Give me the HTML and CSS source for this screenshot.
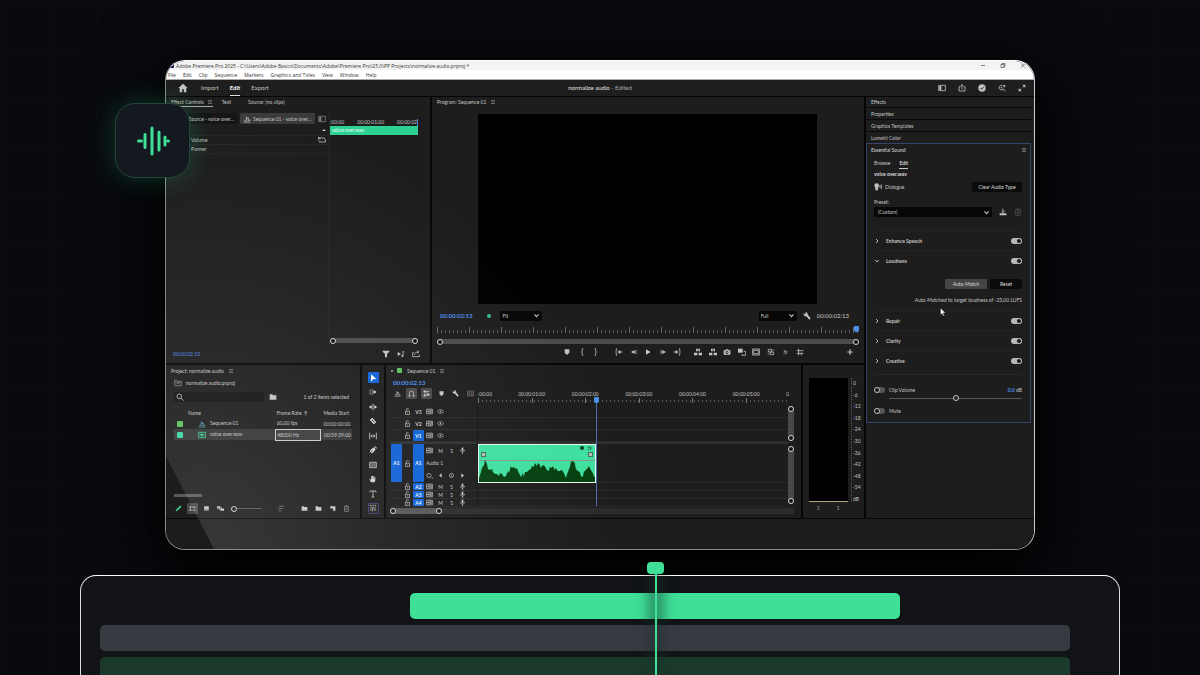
FILE: index.html
```html
<!DOCTYPE html>
<html lang="en">
<head>
<meta charset="utf-8">
<title>normalize audio</title>
<link rel="stylesheet" href="styles.css">
</head>
<body>
<svg class="defs" aria-hidden="true">
  <symbol id="menu" viewBox="0 0 12 12"><path d="M2 3h8M2 6h8M2 9h8" class="ln"/></symbol>
  <symbol id="home" viewBox="0 0 12 12"><path d="M6 1 0.5 6H2v5h3V7.500h2V11h3V6h1.500z" class="fl"/></symbol>
  <symbol id="layout" viewBox="0 0 12 12"><path d="M1 2h10v8H1z" class="ln"/><path d="M2 3h3v6H2z" class="fl"/></symbol>
  <symbol id="share" viewBox="0 0 12 12"><path d="M3.500 4H1.500v6.500h9V4h-2M6 8V1M3.800 3 6 1l2.200 2" class="ln"/></symbol>
  <symbol id="exportf" viewBox="0 0 12 12"><path d="M3 4H1v6h10V7M4 7c0-3 2-4 6-4M8 1l2.500 2L8 5" class="ln"/></symbol>
  <symbol id="check" viewBox="0 0 12 12"><circle cx="6" cy="6" r="5.500" class="fl"/><path d="m3.500 6 2 2 3.500-4" class="dk"/></symbol>
  <symbol id="find" viewBox="0 0 12 12"><path d="M7 2.500A3.500 3.500 0 1 0 8 7.500l3 3.500M9.500 1v4M7.500 3h4M4 5h2v2" class="ln"/></symbol>
  <symbol id="expand" viewBox="0 0 12 12"><path d="m1.500 10.500 3.500-3.500M7 5l3.500-3.500" class="ln"/><path d="M6.500 1H11v4.500zM1 6.500 5.500 11H1z" class="fl"/></symbol>
  <symbol id="seq" viewBox="0 0 12 12"><path d="M1 10.500h10M2 8h2M5 2v7M5 5h3M8 4v5M9 8h2" class="ln"/></symbol>
  <symbol id="loop" viewBox="0 0 12 12"><path d="M3 3h6l2 2v4H2M1 1.500 3.500 3 1 5.500zM1 9l2-2" class="ln"/></symbol>
  <symbol id="filter" viewBox="0 0 12 12"><path d="M1 1h10v1.500L7.500 6v5h-3V6L1 2.500z" class="fl"/></symbol>
  <symbol id="playsnd" viewBox="0 0 12 12"><path d="M1 3v6l5-3z" class="fl"/><path d="M9 9V2l2 1" class="ln"/><circle cx="8" cy="9" r="1.500" class="fl"/></symbol>
  <symbol id="folder" viewBox="0 0 12 12"><path d="M1 2h4l1 1.500h5V10H1z" class="fl"/></symbol>
  <symbol id="bin" viewBox="0 0 12 12"><path d="M1 2h4l1 1.500h5V10H1zM1 5h10M4 7h4" class="ln"/></symbol>
  <symbol id="search" viewBox="0 0 12 12"><circle cx="5" cy="5" r="3.500" class="ln"/><path d="m7.500 7.500 4 4" class="ln"/></symbol>
  <symbol id="wavefile" viewBox="0 0 12 12"><path d="M.5 2h11v8H.5zM2 6h1l1-2 1 4 1-4 1 4 1-3 1 1h1" class="ln"/></symbol>
  <symbol id="pencil" viewBox="0 0 12 12"><path d="m1 11 1-3 7-7 2 2-7 7z" class="fl"/></symbol>
  <symbol id="list" viewBox="0 0 12 12"><path d="M1 2h3v3H1zM1 7h3v3H1zM6 3h5v1.500H6zM6 8h5v1.500H6z" class="fl"/></symbol>
  <symbol id="square" viewBox="0 0 12 12"><path d="M2 2h8v6H2zM2 9h8v1H2z" class="fl"/></symbol>
  <symbol id="stack" viewBox="0 0 12 12"><path d="M0 2h6v4H0zM3 7h4V4h1v4H3zM6 6h6v4H6z" class="fl"/></symbol>
  <symbol id="sort" viewBox="0 0 12 12"><path d="M1 2h10M1 6h7M1 10h5" class="ln"/></symbol>
  <symbol id="page" viewBox="0 0 12 12"><path d="M2 2h9v8H7V6H2z" class="fl"/></symbol>
  <symbol id="trash" viewBox="0 0 12 12"><path d="M1.500 3h9M4.500 3V1h3v2M2.500 3v8h7V3M5 5v4M7 5v4" class="ln"/></symbol>
  <symbol id="arrow" viewBox="0 0 12 12"><path d="M3 .5v11l3-3.500 5-.5z" class="fl"/></symbol>
  <symbol id="trackfwd" viewBox="0 0 12 12"><path d="M1 3h2M4 3h2M1 9h2M4 9h2M1 5v2M4 6h4" class="ln"/><path d="M7 3v6l4.500-3z" class="fl"/></symbol>
  <symbol id="ripple" viewBox="0 0 12 12"><path d="M6 1v10M1 6h3M8 6h3" class="ln"/><path d="M0 6l4-3v6zM12 6 8 3v6z" class="fl"/></symbol>
  <symbol id="razor" viewBox="0 0 12 12"><path d="m1 4 4-3 6 7-4 3z" class="fl"/><path d="m4 4 4 4" class="dk"/></symbol>
  <symbol id="slip" viewBox="0 0 12 12"><path d="M1 1v10M11 1v10M3 6h6M5 4 3 6l2 2M7 4l2 2-2 2" class="ln"/></symbol>
  <symbol id="pen" viewBox="0 0 12 12"><path d="M1 11 2 6l5-4 3 3-4 5zM8 1l1-1 3 3-1 1z" class="fl"/><path d="m1 11 4-4" class="dk"/></symbol>
  <symbol id="rect" viewBox="0 0 12 12"><path d="M1 2h10v8H1z" class="ln"/><path d="M2 3h8v6H2z" class="fl dim"/></symbol>
  <symbol id="hand" viewBox="0 0 12 12"><path d="M3 11 .5 6.500l1-.5L3 7.500V2h1.300v3.500h.4V1H6v4.500h.4V1.500h1.300V6h.5V3h1.300v5L8.500 11z" class="fl"/></symbol>
  <symbol id="type" viewBox="0 0 12 12"><path d="M1.500 3.500v-2h9v2M6 1.500v9M4 10.500h4" class="ln"/></symbol>
  <symbol id="remix" viewBox="0 0 12 12"><path d="M1 2h3M6 1v3M8 2h3M3 4v3M9 4v3M1 9h2M5 6v5M7 9h4M5 6h3" class="ln"/></symbol>
  <symbol id="magnet" viewBox="0 0 12 12"><path d="M2.500 11V5.500a3.500 3.500 0 0 1 7 0V11" class="ln"/><path d="M1 9h3v2H1zM8 9h3v2H8z" class="fl"/></symbol>
  <symbol id="link" viewBox="0 0 12 12"><path d="M1 1h4v3H1zM1 8h4v3H1zM6 6h5v4H6z" class="fl"/><path d="M5 2.500h6M3 4v5M6 5l3-3" class="ln"/></symbol>
  <symbol id="marker" viewBox="0 0 12 12"><path d="M2.500 2h7v5L6 10.500 2.500 7z" class="fl"/></symbol>
  <symbol id="wrench" viewBox="0 0 12 12"><path d="M1 1.500 3 3.500l1.500-1.500L3 .5c3-.8 4.500 1.500 4 3.500l4.500 5.500-2 2L5 6.500C2.500 7 .3 4.500 1 1.500z" class="fl"/></symbol>
  <symbol id="cc" viewBox="0 0 12 12"><path d="M.5 2h11v8H.5zM5 4.500H3v3h2M9.500 4.500h-2v3h2" class="ln"/></symbol>
  <symbol id="lock" viewBox="0 0 12 12"><path d="M2.500 5.500h7V11h-7zM4 5.500V3a2 2 0 0 1 4-.5M6 7.500V9" class="ln"/></symbol>
  <symbol id="sync" viewBox="0 0 12 12"><path d="M1 2h10v8H1zM5 2v8M1 6h4M7 4h2v4H7z" class="ln"/></symbol>
  <symbol id="eye" viewBox="0 0 12 12"><path d="M.5 6C3 2 9 2 11.500 6 9 10 3 10 .5 6z" class="ln"/><circle cx="6" cy="6" r="1.300" class="fl"/></symbol>
  <symbol id="mic" viewBox="0 0 12 12"><path d="M4.500 1h3v6h-3z" class="fl"/><path d="M2.500 5c0 5 7 5 7 0M6 9v3" class="ln"/></symbol>
  <symbol id="keys" viewBox="0 0 12 12"><circle cx="5" cy="6" r="3.500" class="ln"/><path d="M9.500 9.500h2v1.500h-2z" class="fl"/></symbol>
  <symbol id="key" viewBox="0 0 12 12"><circle cx="6" cy="6" r="3.500" class="ln"/><path d="M6 4.500v3" class="ln"/></symbol>
  <symbol id="prev" viewBox="0 0 12 12"><path d="M8 2v8L3.500 6z" class="fl"/></symbol>
  <symbol id="next" viewBox="0 0 12 12"><path d="M4 2v8l4.500-4z" class="fl"/></symbol>
  <symbol id="brl" viewBox="0 0 12 12"><path d="M8 1H6.500v4L5 6l1.500 1v4H8" class="ln"/></symbol>
  <symbol id="brr" viewBox="0 0 12 12"><path d="M4 1h1.500v4L7 6 5.500 7v4H4" class="ln"/></symbol>
  <symbol id="goin" viewBox="0 0 12 12"><path d="M3 1H2v4L.8 6 2 7v4h1M5 6h6.500" class="ln"/><path d="M4 6l4-3v6z" class="fl"/></symbol>
  <symbol id="goout" viewBox="0 0 12 12"><path d="M9 1h1v4l1.200 1L10 7v4H9M.5 6H7" class="ln"/><path d="M8 6 4 3v6z" class="fl"/></symbol>
  <symbol id="stepb" viewBox="0 0 12 12"><path d="M7 3v6L1.500 6z" class="fl"/><path d="M9 3v6" class="ln"/></symbol>
  <symbol id="stepf" viewBox="0 0 12 12"><path d="M5 3v6l5.500-3z" class="fl"/><path d="M3 3v6" class="ln"/></symbol>
  <symbol id="play" viewBox="0 0 12 12"><path d="M3 2v8l7-4z" class="fl"/></symbol>
  <symbol id="lift" viewBox="0 0 12 12"><path d="M0 7h5v4H0zM7 7h5v4H7zM3 1h6v4H3z" class="fl"/><path d="M6 2v3" class="dk"/></symbol>
  <symbol id="camera" viewBox="0 0 12 12"><path d="M1 3.500h2.500l1-1.500h3l1 1.500H11V10H1z" class="fl"/><circle cx="6" cy="6.500" r="1.800" class="dk"/></symbol>
  <symbol id="compare" viewBox="0 0 12 12"><path d="M0 1h7v6H0z" class="fl"/><path d="M8.500 5h3v6H6V9" class="ln"/></symbol>
  <symbol id="safe" viewBox="0 0 12 12"><path d="M.5 1.500h11v9H.5zM2.500 3.500h7v5h-7z" class="ln"/></symbol>
  <symbol id="proxy" viewBox="0 0 12 12"><path d="M2 2h5v4H2zM5 6h5v4H5zM9 2l2 2M1 8l2 2" class="ln"/></symbol>
  <symbol id="guides" viewBox="0 0 12 12"><path d="M1 4h10M1 8h10M4 1v10M8 7v4" class="ln"/></symbol>
  <symbol id="plus" viewBox="0 0 12 12"><path d="M6 2v8M2 6h8" class="ln thick"/></symbol>
  <symbol id="down" viewBox="0 0 12 12"><path d="m2.500 4 3.500 4 3.500-4" class="ln thick"/></symbol>
  <symbol id="right" viewBox="0 0 12 12"><path d="m4 2 4 4-4 4" class="ln thick"/></symbol>
  <symbol id="voice" viewBox="0 0 12 12"><circle cx="4" cy="4" r="3.500" class="fl"/><path d="M2 7h4v4H2z" class="fl"/><path d="M9 3v5M11 2v7" class="ln"/></symbol>
  <symbol id="save" viewBox="0 0 12 12"><path d="M1 8h10v3H1z" class="fl"/><path d="M6 1v6M3.500 4.500 6 7l2.500-2.500" class="ln"/></symbol>
  <symbol id="min" viewBox="0 0 12 12"><path d="M2 6h8" class="ln"/></symbol>
  <symbol id="restore" viewBox="0 0 12 12"><path d="M2 4h6v6H2zM4 4V2h6v6H8" class="ln"/></symbol>
  <symbol id="close" viewBox="0 0 12 12"><path d="m2 2 8 8M10 2l-8 8" class="ln"/></symbol>
</svg>

<main class="stage">
  <section class="window">
    <header class="titlebar">
      <i class="app-mark"></i>
      <span>Adobe Premiere Pro 2025 - C:\Users\Adobe Basics\Documents\Adobe\Premiere Pro\25.0\PP Projects\normalize audio.prproj *</span>
      <div class="win-buttons">
        <button aria-label="Minimize"><svg><use href="#min"/></svg></button>
        <button aria-label="Restore"><svg><use href="#restore"/></svg></button>
        <button aria-label="Close"><svg><use href="#close"/></svg></button>
      </div>
    </header>
    <nav class="menubar">
      <button>File</button><button>Edit</button><button>Clip</button><button>Sequence</button><button>Markers</button><button>Graphics and Titles</button><button>View</button><button>Window</button><button>Help</button>
    </nav>
    <div class="workbar">
      <nav class="modes">
        <button aria-label="Home"><svg class="i9"><use href="#home"/></svg></button>
        <button>Import</button><button class="on">Edit</button><button>Export</button>
      </nav>
      <h1>normalize audio <span>- Edited</span></h1>
      <div class="work-actions">
        <button aria-label="Workspaces"><svg><use href="#layout"/></svg></button>
        <button aria-label="Quick export"><svg><use href="#share"/></svg></button>
        <button aria-label="Progress"><svg><use href="#check"/></svg></button>
        <button aria-label="Find"><svg><use href="#find"/></svg></button>
        <button aria-label="Full screen"><svg><use href="#expand"/></svg></button>
      </div>
    </div>

    <div class="workspace">
      <div class="upper">
        <section class="panel effects">
          <div class="tabs">
            <button class="on">Effect Controls <svg class="i5"><use href="#menu"/></svg></button>
            <button>Text</button><button>Source: (no clips)</button>
          </div>
          <div class="fx-body">
            <div class="fx-list">
              <div class="fx-clips">
                <button class="chip dark">Source - voice over...</button>
                <button class="chip"><svg><use href="#seq"/></svg>Sequence 01 - voice over...</button>
                <svg class="dimmed"><use href="#layout"/></svg>
              </div>
              <div class="fx-row end"><i class="tri"></i></div>
              <div class="fx-row"><span>Volume</span><svg><use href="#loop"/></svg></div>
              <div class="fx-row"><span>Panner</span></div>
            </div>
            <div class="fx-time">
              <div class="fx-ruler"><span>:00:00</span><span>00:00:01:00</span><span>00:00:02</span></div>
              <div class="fx-clip">voice over.wav</div>
              <div class="zoombar push"></div>
            </div>
          </div>
          <footer class="fx-foot">
            <span class="tc-small">00:00:02:13</span>
            <div class="fx-tools"><svg><use href="#filter"/></svg><svg><use href="#playsnd"/></svg><svg><use href="#exportf"/></svg></div>
          </footer>
        </section>

        <section class="panel program">
          <div class="tabs"><button>Program: Sequence 01 <svg class="i5"><use href="#menu"/></svg></button></div>
          <div class="viewer"></div>
          <div class="prog-info">
            <span class="tc">00:00:02:13</span><i class="dot"></i>
            <label class="pick fit"><select aria-label="Zoom level"><option>Fit</option></select><svg><use href="#down"/></svg></label>
            <label class="pick res"><select aria-label="Playback resolution"><option>Full</option></select><svg><use href="#down"/></svg></label>
            <svg><use href="#wrench"/></svg><span class="tc plain">00:00:02:13</span>
          </div>
          <div class="prog-ruler"><i class="head"></i></div>
          <div class="zoombar"></div>
          <div class="transport">
            <div class="tg g1"><svg><use href="#marker"/></svg><svg><use href="#brl"/></svg><svg><use href="#brr"/></svg></div>
            <div class="tg g2"><svg><use href="#goin"/></svg><svg><use href="#stepb"/></svg><svg><use href="#play"/></svg><svg><use href="#stepf"/></svg><svg><use href="#goout"/></svg></div>
            <div class="tg g3"><svg><use href="#lift"/></svg><svg><use href="#lift"/></svg><svg><use href="#camera"/></svg><svg><use href="#compare"/></svg><svg><use href="#safe"/></svg><svg><use href="#proxy"/></svg><em>fx</em><svg><use href="#guides"/></svg></div>
            <svg class="last"><use href="#plus"/></svg>
          </div>
        </section>
      </div>

      <div class="lower">
        <section class="panel project">
          <div class="tabs"><button>Project: normalize audio <svg class="i5"><use href="#menu"/></svg></button></div>
          <div class="crumb"><svg class="dimmed"><use href="#bin"/></svg>normalize audio.prproj</div>
          <div class="searchrow">
            <label class="search"><svg><use href="#search"/></svg><input type="text" aria-label="Search"></label>
            <svg><use href="#folder"/></svg><span>1 of 2 items selected</span>
          </div>
          <table class="items">
            <thead><tr><th class="c-tag"></th><th class="c-name">Name</th><th class="c-rate">Frame Rate &nbsp;<b>↑</b></th><th>Media Start</th></tr></thead>
            <tbody>
              <tr><td><i class="tag leaf"></i></td><td class="nm"><svg class="blue"><use href="#seq"/></svg>Sequence 01</td><td>60,00 fps</td><td>00:00:00:00</td></tr>
              <tr class="sel"><td><i class="tag mint"></i></td><td class="nm"><svg class="green"><use href="#wavefile"/></svg>voice over.wav</td><td class="boxed">48000 Hz</td><td>00:59:59:00</td></tr>
            </tbody>
          </table>
          <div class="hscroll"></div>
          <footer class="proj-foot">
            <svg class="green"><use href="#pencil"/></svg><button class="pressed" aria-label="List view"><svg><use href="#list"/></svg></button><svg><use href="#square"/></svg><svg><use href="#stack"/></svg>
            <input type="range" min="0" max="100" value="0" aria-label="Icon size">
            <svg class="dimmed sorter"><use href="#sort"/></svg><svg><use href="#folder"/></svg><svg><use href="#folder"/></svg><svg><use href="#page"/></svg><svg class="dimmed"><use href="#trash"/></svg>
          </footer>
        </section>

        <aside class="panel tools">
          <button class="active" aria-label="Selection"><svg><use href="#arrow"/></svg></button>
          <button aria-label="Track select"><svg><use href="#trackfwd"/></svg></button>
          <button aria-label="Ripple edit"><svg><use href="#ripple"/></svg></button>
          <button aria-label="Razor"><svg><use href="#razor"/></svg></button>
          <button aria-label="Slip"><svg><use href="#slip"/></svg></button>
          <button aria-label="Pen"><svg><use href="#pen"/></svg></button>
          <button aria-label="Rectangle"><svg><use href="#rect"/></svg></button>
          <button aria-label="Hand"><svg><use href="#hand"/></svg></button>
          <button aria-label="Type"><svg><use href="#type"/></svg></button>
          <button class="outlined" aria-label="Remix"><svg><use href="#remix"/></svg></button>
        </aside>

        <section class="panel timeline">
          <div class="tabs"><i class="closer"></i><button><i class="tag leaf"></i>Sequence 01 <svg class="i5"><use href="#menu"/></svg></button></div>
          <div class="tl-top">
            <div class="tl-ctl">
              <span class="tc">00:00:02:13</span>
              <div class="tl-icons"><svg><use href="#seq"/></svg><button class="pressed" aria-label="Snap"><svg><use href="#magnet"/></svg></button><button class="pressed" aria-label="Linked selection"><svg><use href="#link"/></svg></button><svg><use href="#marker"/></svg><svg><use href="#wrench"/></svg><svg class="dimmed"><use href="#cc"/></svg></div>
            </div>
            <div class="tl-ruler">
              <div class="tl-labels"><span>:00:00</span><span>00:00:01:00</span><span>00:00:02:00</span><span>00:00:03:00</span><span>00:00:04:00</span><span>00:00:05:00</span><span>0</span></div>
              <div class="tl-ticks"></div>
            </div>
          </div>
          <div class="tl-body">
            <div class="heads">
              <div class="vh"><i></i><svg><use href="#lock"/></svg><b>V3</b><svg><use href="#sync"/></svg><svg><use href="#eye"/></svg></div>
              <div class="vh"><i></i><svg><use href="#lock"/></svg><b>V2</b><svg><use href="#sync"/></svg><svg><use href="#eye"/></svg></div>
              <div class="vh"><i></i><svg><use href="#lock"/></svg><b class="hot">V1</b><svg><use href="#sync"/></svg><svg><use href="#eye"/></svg></div>
              <div class="ah"><b class="hot">A1</b><svg><use href="#lock"/></svg><b class="hot">A1</b>
                <div class="ah-ctl">
                  <div><svg><use href="#sync"/></svg><span>M</span><span>S</span><svg><use href="#mic"/></svg></div>
                  <p>Audio 1</p>
                  <div><svg><use href="#keys"/></svg><svg><use href="#prev"/></svg><svg><use href="#key"/></svg><svg><use href="#next"/></svg></div>
                </div>
              </div>
              <div class="sh"><i></i><svg><use href="#lock"/></svg><b class="hot">A2</b><svg><use href="#sync"/></svg><span>M</span><span>S</span><svg><use href="#mic"/></svg></div>
              <div class="sh"><i></i><svg><use href="#lock"/></svg><b class="hot">A3</b><svg><use href="#sync"/></svg><span>M</span><span>S</span><svg><use href="#mic"/></svg></div>
              <div class="sh"><i></i><svg><use href="#lock"/></svg><b class="hot">A4</b><svg><use href="#sync"/></svg><span>M</span><span>S</span><svg><use href="#mic"/></svg></div>
            </div>
            <div class="lanes">
              <div class="lane v"></div><div class="lane v"></div><div class="lane v"></div>
              <div class="lane a">
                <div class="clip">
                  <div class="clip-marks"><i></i><em>fx</em></div>
                  <div class="clip-fades"><i></i><i></i></div>
                  <svg class="wave" viewBox="0 0 116 24" preserveAspectRatio="none"><path class="wave-line" d="M0 2.500h116"/><path class="wave-fill" d="M0 24V20l2-6 1-4 2-3 1-5 2 4 1 5 2 1 2-1 1 3 2 2 2 0 2 2 1-3 2 1 2 3 2-1 2-5 1 2 2-7 1 2 2-1 2 2 1-1 1 3 2 4 1 2 2-4 1 4 1-5 2 0 2-2 2-1 1-3 2 1 1-4 2 3 1-3 2 2 1 3 1-2 2-1 2 3 1 2 2 1 1-4 2 1 1-2 2 4 1-2 2 3 2 0 1-1 2 1 2 4 1 3 2-6 2-5 1-5 2-1 2 2 1 6 2 2 2 1 1 4 2 1 1-5 2-2 2-2 1-2 2 4 2 3 1 3 2 2 1 3 1 3V24z"/></svg>
                </div>
              </div>
              <div class="lane s"></div><div class="lane s"></div><div class="lane s"></div>
              <div class="cti"></div>
            </div>
            <div class="vbars"><div class="vbar"></div><div class="vbar tall"></div></div>
          </div>
          <div class="tl-scroll"><div class="zoombar"></div></div>
        </section>

        <section class="panel meters">
          <div class="meter-row">
            <div class="meter"></div>
            <div class="scale"><span>0</span><span>-6</span><span>-12</span><span>-18</span><span>-24</span><span>-30</span><span>-36</span><span>-42</span><span>-48</span><span>-54</span><span>dB</span></div>
          </div>
          <div class="solo"><span>S</span><span>S</span></div>
        </section>
      </div>

      <aside class="panel side">
        <button class="fold">Effects</button><button class="fold">Properties</button><button class="fold">Graphics Templates</button><button class="fold">Lumetri Color</button>
        <section class="sound">
          <div class="sound-head"><h2>Essential Sound</h2><svg class="i5"><use href="#menu"/></svg></div>
          <div class="sound-tabs"><button>Browse</button><button class="on">Edit</button></div>
          <h3>voice over.wav</h3>
          <div class="typerow"><svg><use href="#voice"/></svg><span>Dialogue</span><button class="btn clear">Clear Audio Type</button></div>
          <label class="plabel" for="preset">Preset:</label>
          <div class="presetrow"><div class="pick wide"><select id="preset"><option>(Custom)</option></select><svg><use href="#down"/></svg></div><svg><use href="#save"/></svg><svg class="faint"><use href="#trash"/></svg></div>
          <div class="sect first"><svg><use href="#right"/></svg><label for="t1">Enhance Speech</label><input id="t1" type="checkbox" checked></div>
          <div class="sect"><svg><use href="#down"/></svg><label for="t2">Loudness</label><input id="t2" type="checkbox" checked></div>
          <div class="loud"><div><button class="btn match">Auto-Match</button><button class="btn reset">Reset</button></div><p>Auto-Matched to target loudness of -23,00 LUFS</p></div>
          <div class="sect"><svg><use href="#right"/></svg><label for="t3">Repair</label><input id="t3" type="checkbox" checked></div>
          <div class="sect"><svg><use href="#right"/></svg><label for="t4">Clarity</label><input id="t4" type="checkbox" checked></div>
          <div class="sect"><svg><use href="#right"/></svg><label for="t5">Creative</label><input id="t5" type="checkbox" checked></div>
          <div class="vol">
            <div class="volrow"><input id="t6" type="checkbox"><label for="t6">Clip Volume</label><output><b>0,0</b> dB</output></div>
            <input class="volrange" type="range" value="50" aria-label="Clip volume level">
            <div class="volrow"><input id="t7" type="checkbox"><label for="t7">Mute</label></div>
          </div>
          <svg class="cursor" viewBox="0 0 12 18"><path d="M1 1v14l3.500-3 2.200 5 2.300-1-2.200-5H11z"/></svg>
        </section>
      </aside>
    </div>
    <div class="statusbar"></div>
  </section>

  <div class="badge">
    <svg viewBox="0 0 34 30"><path d="M2.500 15h3M9 8.500v13M16 2v26M23 6v18M29 11v8M32 15h.5"/></svg>
  </div>

  <section class="tracks">
    <div class="bar bright"></div>
    <div class="bar slate"></div>
    <div class="bar forest"></div>
    <div class="playhead"></div>
  </section>
</main>
</body>
</html>
```

FILE: styles.css
```css
*, *::before, *::after { box-sizing: border-box; }
html, body { margin: 0; height: 100%; }
body {
  overflow: hidden;
  background: #090a0f;
  color: #c4c4c4;
  font: 5px/6px Lato, "Open Sans", sans-serif;
}
h1, h2, h3, p { margin: 0; font-size: inherit; font-weight: inherit; }
button, input, select { font: inherit; color: inherit; margin: 0; padding: 0; border: 0; background: none; }
button { display: flex; align-items: center; white-space: nowrap; }
svg { width: 8px; height: 8px; flex: none; display: block; color: inherit; }
.defs { position: absolute; width: 0; height: 0; }
.ln { fill: none; stroke: currentColor; stroke-width: 1.2; }
.thick { stroke-width: 1.8; }
.fl { fill: currentColor; }
.dk { fill: none; stroke: #1d1d1d; stroke-width: 1.3; }
.dim { opacity: .4; }
.i5 { width: 6px; height: 6px; margin-left: 4px; opacity: .7; }
.i9 { width: 10px; height: 10px; }
.dimmed { opacity: .6; }
.faint { opacity: .3; }
.green { color: #3bd68f; }
.blue { color: #5aa3b8; }

.stage {
  position: relative;
  height: 100%;
  overflow: hidden;
  padding-top: 60px;
  display: flex;
  flex-direction: column;
  align-items: center;
  background:
    repeating-linear-gradient(90deg, rgba(255,255,255,.012) 0 1px, transparent 1px 48px),
    repeating-linear-gradient(0deg, rgba(255,255,255,.008) 0 1px, transparent 1px 48px),
    #090a0f;
}

/* application window */
.window {
  position: relative;
  flex: none;
  width: 72.5%;
  border: 1px solid #8a8a8a;
  border-top-color: #fff;
  border-right-color: #cfcfcf;
  border-radius: 20px;
  overflow: hidden;
  background: #050505;
  box-shadow: 0 24px 70px 12px #000;
}
.window::after {
  content: "";
  position: absolute;
  inset: 20px 0 0 0;
  pointer-events: none;
  clip-path: polygon(0 0, 100% 0, 100% 100%, 48px 100%, 0 375px);
  background: radial-gradient(circle at 4% 100%, rgba(255,255,255,.12), rgba(255,255,255,.05) 220px, transparent 430px);
}
.titlebar, .menubar { font-family: "Open Sans", sans-serif; color: #333; }
.titlebar { display: flex; align-items: center; gap: 2px; height: 9px; padding-left: 3px; background: #f3f3f3; }
.app-mark { width: 5px; height: 5px; border-radius: 1px; background: #14145e; }
.win-buttons { display: flex; gap: 14px; margin-left: auto; padding-right: 8px; }
.win-buttons svg { width: 6px; height: 7px; }
.menubar { display: flex; gap: 7px; height: 10px; padding: 0 6px; background: #fff; border-bottom: 1px solid #aaa; }
.menubar button:first-child { margin-left: -4px; }
.workbar {
  display: grid;
  grid-template-columns: 1fr auto 1fr;
  align-items: center;
  height: 17px;
  background: #1e1e1e;
  border-bottom: 1px solid #050505;
  font-size: 6px;
}
.modes { display: flex; gap: 11px; padding-left: 12px; height: 100%; }
.modes button { border-bottom: 1px solid transparent; }
.modes button:first-child { margin-right: 2px; }
.modes .on { color: #fff; border-color: #ddd; font-weight: 700; }
.workbar h1 { color: #e4e4e4; }
.workbar h1 span { color: #aaa; }
.work-actions { display: flex; gap: 12px; justify-content: flex-end; padding-right: 8px; }

.workspace {
  display: grid;
  grid-template-columns: minmax(0, 1fr) 168px;
  grid-template-rows: auto auto;
  gap: 2px;
}
.upper { grid-area: 1 / 1; display: grid; grid-template-columns: 264px minmax(0, 1fr); gap: 2px; }
.lower { grid-area: 2 / 1; display: grid; grid-template-columns: 194px 22px minmax(0, 1fr) 61px; gap: 2px; }
.side { grid-area: 1 / 2 / 3 / 3; }
.panel { background: #1d1d1d; display: flex; flex-direction: column; min-width: 0; }
.tabs { display: flex; gap: 9px; padding-left: 5px; height: 11px; flex: none; }
.upper .tabs { height: 10px; }
.tabs .on { border-bottom: 1px solid #aaa; }
.statusbar { height: 30px; margin-top: 1px; background: #1c1c1c; }

/* effect controls */
.effects .i5 { margin-left: 3px; }
.effects .tabs button + button + button { margin-left: 8px; }
.fx-body { flex: 1; display: flex; margin-top: 4px; min-height: 0; }
.fx-list { flex: 1; padding-left: 17px; padding-top: 1px; }
.fx-clips { display: flex; align-items: center; gap: 3px; height: 13px; }
.chip { height: 11px; padding: 0 3px; gap: 2px; background: #3b3b3b; border-radius: 1px; }
.chip.dark { background: #151515; width: 54px; justify-content: flex-end; }
.fx-row { display: flex; justify-content: space-between; align-items: center; height: 9px; padding: 0 3px 0 8px; border-bottom: 1px solid #262626; }
.fx-row.end { justify-content: flex-end; height: 11px; }
.tri { border: 2px solid transparent; border-top: 0; border-bottom-color: #bbb; }
.fx-time { width: 101px; padding: 8px 12px 2px 0; border-left: 1px solid #292929; display: flex; flex-direction: column; }
.fx-ruler { display: flex; justify-content: space-between; height: 7px; overflow: hidden; border-right: 1px solid #4b91e8; }
.fx-clip { height: 9px; line-height: 8px; padding-left: 2px; color: #e6fff4; background: #2fd193; }
.push { margin-top: auto; }
.zoombar { display: flex; justify-content: space-between; align-items: center; height: 5px; background: #4b4b4b; border-radius: 3px; flex: none; }
.zoombar::before, .zoombar::after, .vbar::before, .vbar::after {
  content: ""; width: 6px; height: 6px; border: 1px solid #d4d4d4; border-radius: 50%; background: #111; flex: none;
}
.fx-foot { display: flex; justify-content: space-between; align-items: center; height: 18px; padding: 0 10px 0 7px; }
.fx-tools { display: flex; gap: 7px; }
.tc-small { color: #4c86e8; }
.tc { color: #4c8ff0; font-size: 6px; line-height: 8px; font-weight: 700; }
.tc.plain { color: #c4c4c4; font-weight: 400; }

/* program monitor */
.program { padding-bottom: 3px; }
.viewer { height: 190px; margin: 7px 47px 5px 46px; background: #000; }
.prog-info { display: flex; align-items: center; height: 13px; padding: 0 15px 0 8px; gap: 6px; }
.dot { width: 4px; height: 4px; margin: 0 3px 0 9px; border-radius: 50%; background: #2fbf85; }
.pick { display: flex; align-items: center; height: 10px; background: #070707; border-radius: 1px; padding: 0 2px; }
.pick select { flex: 1; min-width: 0; height: 10px; appearance: none; line-height: 10px; }
.pick svg { width: 7px; height: 7px; }
.fit { width: 42px; }
.res { width: 38px; margin-left: auto; }
.prog-ruler {
  display: flex; justify-content: flex-end; height: 8px; margin: 4px 5px 5px;
  background:
    repeating-linear-gradient(90deg, #666 0 1px, transparent 1px 32px) 0 1px / 100% 6px no-repeat,
    repeating-linear-gradient(90deg, #555 0 1px, transparent 1px 4px) 0 4px / 100% 3px no-repeat;
}
.head { width: 5px; height: 6px; background: #4b91e8; border-radius: 1px 1px 2px 2px; }
.program .zoombar { margin: 0 5px; }
.transport { display: flex; align-items: center; height: 16px; padding: 0 10px 0 131px; }
.tg { display: flex; justify-content: space-between; align-items: center; }
.g1 { width: 37px; margin-right: 15px; }
.g2 { width: 66px; margin-right: 13px; }
.g3 { width: 110px; }
.g3 em { width: 8px; text-align: center; }
.last { margin-left: auto; }

/* project */
.project { padding-bottom: 4px; }
.crumb { display: flex; align-items: center; gap: 4px; height: 14px; padding-left: 8px; }
.searchrow { display: flex; align-items: center; gap: 5px; height: 14px; padding: 0 11px 0 8px; }
.searchrow > span { margin-left: auto; }
.search { display: flex; align-items: center; flex: 0 1 90px; height: 10px; padding-left: 2px; background: #131313; }
.search input { flex: 1; min-width: 0; outline: 0; }
.items { margin: 4px 8px 0 8px; border-collapse: collapse; table-layout: fixed; }
.items th, .items td { padding: 0 1px; height: 11px; text-align: left; font-weight: 400; white-space: nowrap; overflow: hidden; }
.items th { height: 10px; }
.c-tag { width: 13px; }
.c-name { width: 89px; }
.c-rate { width: 45px; }
.items td:last-child, .items th:last-child { padding-left: 3px; }
.sel { background: #343434; }
.items .boxed { border: 1px solid #c9c9c9; background: #3a3a3a; }
.nm svg { display: inline-block; vertical-align: middle; margin: 0 4px 0 10px; }
.tag { display: block; width: 6px; height: 6px; margin-left: 2px; border-radius: 1px; }
.leaf { background: #5cbf5f; }
.mint { background: #3bd6a0; }
.hscroll { width: 28px; height: 3px; margin: auto 0 6px 8px; background: #5a5a5a; }
.proj-foot { display: flex; align-items: center; gap: 7px; height: 11px; padding: 0 10px 0 9px; }
.proj-foot svg { width: 7px; height: 7px; }
.pressed { justify-content: center; width: 11px; height: 11px; background: #484848; border-radius: 1px; }
.proj-foot .pressed { margin: 0 -2px; }
input[type=range] { appearance: none; height: 6px; background: linear-gradient(#555, #555) center / 100% 1px no-repeat; }
input[type=range]::-webkit-slider-thumb { appearance: none; box-sizing: border-box; width: 6px; height: 6px; border: 1px solid #ccc; border-radius: 50%; background: #1d1d1d; }
.proj-foot input { flex: 0 1 31px; min-width: 0; }
.proj-foot .sorter { margin: 0 auto; }

/* tools */
.tools { align-items: center; justify-content: space-between; padding: 7px 0 4px; }
.tools button { width: 11px; height: 11px; justify-content: center; border-radius: 1px; color: #d0d0d0; }
.tools .active { background: #0f62d6; color: #fff; }
.tools .outlined { border: 1px solid #48396e; }

/* timeline */
.timeline { padding: 0 7px 4px 4px; }
.timeline .tabs { gap: 4px; align-items: center; padding-left: 1px; }
.closer { width: 2px; height: 2px; background: #888; }
.timeline .tag { margin: 0 5px 0 0; width: 5px; height: 5px; }
.tl-top { display: flex; height: 30px; }
.tl-ctl { flex: 0 0 88px; padding-top: 3px; }
.tl-ctl .tc { display: block; padding-left: 3px; }
.tl-icons { display: grid; grid-template-columns: repeat(6, 1fr); align-items: center; justify-items: center; margin-top: 1px; height: 11px; }
.tl-icons svg { width: 7px; height: 7px; }
.tl-ruler { flex: 1; min-width: 0; padding: 15px 5px 0 0; }
.tl-labels { display: flex; height: 7px; overflow: hidden; }
.tl-labels span { flex: 10 0 0; min-width: 0; display: flex; justify-content: center; }
.tl-labels span:first-child { flex-grow: 5; justify-content: flex-start; }
.tl-labels span:last-child { flex-grow: 3; justify-content: flex-end; }
.tl-ticks {
  height: 5px;
  background:
    repeating-linear-gradient(90deg, #777 0 1px, transparent 1px 17.24%) ,
    repeating-linear-gradient(90deg, #555 0 1px, transparent 1px 4px) 0 2px / 100% 2px no-repeat;
}
.tl-body { display: flex; height: 101px; }
.heads { flex: 0 0 88px; border-right: 1px solid #151515; }
.vh, .sh { display: grid; grid-template-columns: repeat(7, 11px); align-items: center; justify-items: center; height: 12px; border-bottom: 1px solid #292929; padding-left: 1px; }
.vh svg, .sh svg, .ah svg { width: 7px; height: 7px; }
.sh { height: 8px; }
.heads b { font-weight: 700; align-self: stretch; display: flex; align-items: center; justify-content: center; width: 11px; }
.hot { background: #0f62d6; color: #e6efff; border-radius: 1px; }
.ah { display: grid; grid-template-columns: 11px 11px 11px 44px; align-items: center; justify-items: center; height: 41px; padding: 0 0 1px 1px; border-top: 2px solid #303030; }
.ah-ctl { align-self: stretch; justify-self: stretch; display: flex; flex-direction: column; justify-content: space-around; }
.ah-ctl div { display: grid; grid-template-columns: repeat(4, 11px); align-items: center; justify-items: center; }
.ah-ctl p { padding-left: 2px; }
.lanes { position: relative; flex: 1; min-width: 0; }
.lane { border-bottom: 1px solid #282828; }
.lane.v { height: 12px; }
.lane.a { height: 41px; border-top: 2px solid #303030; }
.lane.s { height: 8px; }
.clip { width: 38%; height: 39px; border: 1px solid #e8f6ef; background: #3fdf9f; display: flex; flex-direction: column; justify-content: space-between; }
.clip-marks { display: flex; justify-content: flex-end; align-items: center; gap: 4px; height: 6px; padding: 0 3px; color: #0a3d22; }
.clip-marks i { width: 4px; height: 4px; background: #0a3d22; border-radius: 50%; }
.clip-fades { display: flex; justify-content: space-between; padding: 0 2px; }
.clip-fades i { width: 5px; height: 5px; background: #a9c4b5; border: 1px solid #4b6d5b; }
.wave { width: 100%; height: 24px; }
.wave-line { stroke: #7e9f8d; stroke-width: 1; }
.wave-fill { fill: #05400f; }
.cti { position: absolute; left: 38%; top: -9px; bottom: 1px; width: 1px; background: #4c6fae; }
.cti::before { content: ""; display: block; width: 5px; height: 6px; margin-left: -2px; background: #4b91e8; border-radius: 1px 1px 2px 2px; }
.vbars { flex: 0 0 6px; display: flex; flex-direction: column; gap: 5px; padding-bottom: 3px; }
.vbar { display: flex; flex-direction: column; justify-content: space-between; align-items: center; height: 35px; border-radius: 3px; background: #484848; }
.vbar.tall { flex: 1; }
.tl-scroll { background: #2b2b2b; margin-top: 1px; }
.tl-scroll .zoombar { width: 52px; height: 6px; background: #555; }

/* audio meters */
.meters { padding: 13px 2px 0 6px; }
.meter-row { display: flex; gap: 3px; height: 124px; }
.meter { flex: 0 0 39px; background: #000; border-bottom: 1px solid #b3a27c; }
.scale { flex: 1; display: flex; flex-direction: column; justify-content: space-between; padding: 2px 0 0 1px; border-left: 1px dotted #555; }
.solo { display: flex; gap: 17px; padding: 3px 0 0 8px; color: #999; }

/* side panel */
.side { padding-right: 3px; }
.fold { height: 12px; padding-left: 5px; border-bottom: 1px solid #090909; }
.fold:first-child { height: 11px; }
.sound { position: relative; border: 1px solid #34436b; padding: 0 8px 8px 7px; margin-top: -1px; }
.sound-head { display: flex; justify-content: space-between; height: 11px; align-items: center; margin: 0 -5px 0 -3px; color: #ddd; }
.sound-tabs { display: flex; gap: 9px; height: 12px; margin-top: 2px; }
.sound-tabs .on { border-bottom: 1px solid #ccc; color: #eee; }
.sound h3 { margin-top: 1px; line-height: 8px; font-weight: 700; color: #ddd; }
.typerow { display: flex; align-items: center; gap: 3px; height: 12px; margin-top: 3px; }
.btn { height: 10px; justify-content: center; border-radius: 1px; background: #0b0b0b; color: #ddd; }
.clear { width: 50px; margin-left: auto; }
.plabel { display: block; margin-top: 6px; }
.presetrow { display: flex; align-items: center; gap: 7px; margin-top: 2px; }
.wide { flex: 1; padding: 0 2px 0 4px; }
.sect { display: flex; align-items: center; gap: 6px; height: 20px; font-weight: 700; border-top: 1px solid #242424; }
.sect svg { width: 6px; height: 6px; }
.sect.first { margin-top: 13px; }
.sect input { margin-left: auto; }
input[type=checkbox] { appearance: none; display: flex; align-items: center; width: 11px; height: 6px; border-radius: 3px; background: #555; }
input[type=checkbox]::before { content: ""; width: 6px; height: 6px; border: 1px solid #bbb; border-radius: 50%; background: #151515; }
input[type=checkbox]:checked { background: #b8b8b8; justify-content: flex-end; }
.loud { height: 40px; padding-top: 9px; text-align: right; }
.loud div { display: flex; justify-content: flex-end; gap: 3px; }
.loud p { margin-top: 8px; }
.match { width: 42px; background: #454545; }
.reset { width: 32px; }
.vol { margin-top: 4px; padding-top: 11px; border-top: 1px solid #282828; }
.volrow { display: flex; align-items: center; gap: 4px; height: 7px; }
.volrow output { margin-left: auto; }
.volrow output b { color: #4c8ff0; }
.volrange { display: block; width: calc(100% - 15px); margin: 2px 0 6px 15px; }
.cursor { position: absolute; left: 45%; top: 163px; width: 6px; height: 10px; }
.cursor path { fill: #fff; stroke: #222; }

/* floating badge */
.badge {
  position: absolute;
  left: calc(13.75% - 50px);
  top: 103px;
  width: 75px;
  height: 75px;
  display: grid;
  place-items: center;
  border: 1px solid #24453b;
  border-radius: 20px;
  background: #14191f;
  box-shadow: 0 0 26px rgba(47, 209, 140, .24);
}
.badge svg { width: 34px; height: 30px; }
.badge path { fill: none; stroke: #3fdf98; stroke-width: 3; stroke-linecap: round; }

/* foreground tracks */
.tracks {
  position: relative;
  flex: none;
  width: calc(100% - 160px);
  margin-top: 25px;
  padding: 17px 49px 20px 19px;
  display: flex;
  flex-direction: column;
  gap: 6px;
  border: 1px solid #dcdcdc;
  border-top-color: #fff;
  border-radius: 16px;
  background: #111317;
}
.bar { height: 26px; border-radius: 5px; }
.bright { width: 50.5%; margin-left: 32%; background: #3fdf98; }
.slate { background: #383a42; }
.forest { background: #1c3a2b; height: 60px; }
.playhead {
  position: absolute;
  left: 55.3%;
  top: -1px;
  bottom: 0;
  width: 2px;
  background: #3fdf98;
  box-shadow: 0 0 14px 5px rgba(20, 50, 40, .6);
}
.playhead::before {
  content: "";
  position: absolute;
  left: -8px;
  top: -13px;
  width: 17px;
  height: 12px;
  border-radius: 4px;
  background: #3fdf98;
}
.playhead::after { content: ""; position: absolute; top: -2px; width: 2px; height: 4px; background: #3fdf98; }
```
